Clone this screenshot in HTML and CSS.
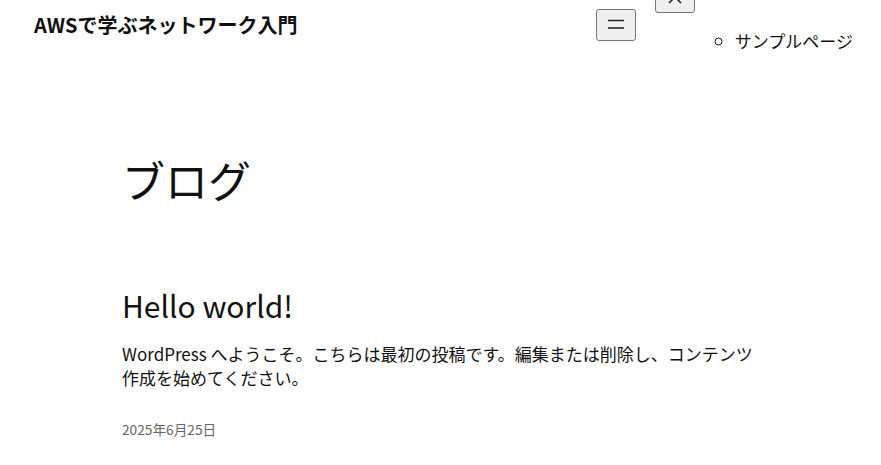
FILE: index.html
```html
<!DOCTYPE html>
<html lang="ja">
<head>
<meta charset="utf-8">
<title>ブログ</title>
<link rel="stylesheet" href="styles.css">
</head>
<body>
<header class="site-header">
  <p class="site-title">AWSで学ぶネットワーク入門</p>
  <nav class="site-nav">
    <button class="nav-btn open-btn" aria-label="メニューを開く">
      <svg width="24" height="24" viewBox="0 0 24 24"><path d="M4 7.5h16M4 15h16" stroke="#1e1e1e" stroke-width="1.5" fill="none"/></svg>
    </button>
    <div class="nav-panel">
      <button class="nav-btn close-btn" aria-label="メニューを閉じる">
        <svg width="24" height="24" viewBox="0 0 24 24"><path d="M6 6l12 12M18 6L6 18" stroke="#1e1e1e" stroke-width="1.5" fill="none"/></svg>
      </button>
      <ul class="nav-list">
        <li><a href="#">サンプルページ</a></li>
      </ul>
    </div>
  </nav>
</header>
<main class="content">
  <h1 class="page-title">ブログ</h1>
  <article class="post">
    <h2 class="post-title">Hello world!</h2>
    <p class="post-excerpt">WordPress へようこそ。こちらは最初の投稿です。編集または削除し、コンテンツ作成を始めてください。</p>
    <p class="post-date">2025年6月25日</p>
  </article>
</main>
</body>
</html>
```

FILE: styles.css
```css
html, body {
  margin: 0;
  padding: 0;
  background: #fff;
  color: #111;
  font-family: "Noto Sans CJK JP", "Noto Sans", sans-serif;
}
.site-header {
  display: flex;
  align-items: center;
  justify-content: space-between;
  height: 50px;
  padding: 0 28px 0 34px;
}
.site-title {
  margin: 0;
  font-size: 20px;
  font-weight: 700;
  line-height: 1.2;
}
.site-nav {
  display: flex;
  align-items: center;
  gap: 19px;
}
.nav-btn {
  display: flex;
  align-items: center;
  justify-content: center;
  width: 40px;
  height: 32px;
  padding: 0;
  background: #efefef;
  border: 1px solid #767676;
  border-radius: 3px;
}
.nav-panel {
  display: flex;
  flex-direction: column;
  align-items: flex-start;
}
.nav-list {
  margin: 16px 0;
  padding-left: 80px;
  list-style: circle;
  font-size: 17px;
  line-height: 24px;
}
.nav-list a {
  color: #111;
  text-decoration: none;
}
.content {
  padding: 0 122px;
}
.page-title {
  margin: 104px 0 0;
  font-size: 43px;
  font-weight: 400;
  line-height: 1.2;
}
.post {
  max-width: 640px;
}
.post-title {
  margin: 81px 0 0;
  font-size: 30px;
  font-weight: 400;
  line-height: 1.2;
}
.post-excerpt {
  margin: 19px 0 0;
  font-size: 17px;
  line-height: 24px;
}
.post-date {
  margin: 29px 0 0;
  font-size: 13.7px;
  color: #666;
}
```
